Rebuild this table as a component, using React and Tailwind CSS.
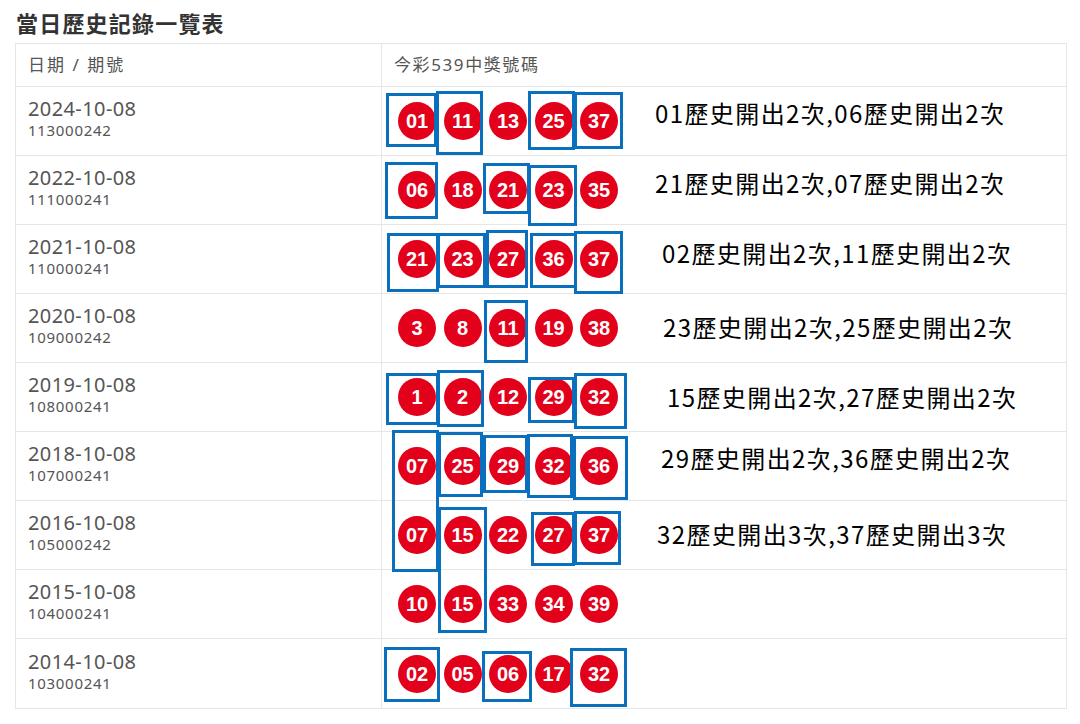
import React from 'react';

const ROWS = [
  { date: '2024-10-08', period: '113000242', balls: ['01', '11', '13', '25', '37'] },
  { date: '2022-10-08', period: '111000241', balls: ['06', '18', '21', '23', '35'] },
  { date: '2021-10-08', period: '110000241', balls: ['21', '23', '27', '36', '37'] },
  { date: '2020-10-08', period: '109000242', balls: ['3', '8', '11', '19', '38'] },
  { date: '2019-10-08', period: '108000241', balls: ['1', '2', '12', '29', '32'] },
  { date: '2018-10-08', period: '107000241', balls: ['07', '25', '29', '32', '36'] },
  { date: '2016-10-08', period: '105000242', balls: ['07', '15', '22', '27', '37'] },
  { date: '2015-10-08', period: '104000241', balls: ['10', '15', '33', '34', '39'] },
  { date: '2014-10-08', period: '103000241', balls: ['02', '05', '06', '17', '32'] },
];

// hand-drawn highlight boxes over the balls: [x1, y1, x2, y2]
const MARKS = [
  [386, 93, 437, 147], [436, 91, 483, 155], [528, 91, 575, 150], [574, 92, 623, 149],
  [385, 162, 438, 219], [483, 163, 530, 214], [528, 165, 577, 226],
  [387, 233, 439, 292], [437, 233, 486, 288], [486, 230, 528, 288], [530, 233, 577, 288], [574, 231, 623, 294],
  [484, 300, 528, 363],
  [386, 373, 439, 425], [437, 370, 484, 427], [528, 377, 575, 423], [574, 373, 627, 429],
  [392, 430, 439, 572], [438, 432, 483, 497], [483, 435, 528, 493], [527, 434, 573, 498], [573, 436, 628, 500],
  [438, 507, 487, 633], [531, 512, 575, 566], [574, 511, 621, 565],
  [384, 647, 440, 702], [482, 651, 532, 702], [570, 648, 627, 707],
];

// annotation notes: [left, top, text]
const NOTES = [
  [655, 97, '01歷史開出2次,06歷史開出2次'],
  [655, 167, '21歷史開出2次,07歷史開出2次'],
  [662, 237, '02歷史開出2次,11歷史開出2次'],
  [663, 311, '23歷史開出2次,25歷史開出2次'],
  [667, 381, '15歷史開出2次,27歷史開出2次'],
  [661, 442, '29歷史開出2次,36歷史開出2次'],
  [657, 518, '32歷史開出3次,37歷史開出3次'],
];

const Ball = ({ n }) => (
  <div className="w-[38px] h-[38px] rounded-full bg-[#e2001a] flex items-center justify-center text-white font-bold text-[20px] leading-none font-['Liberation_Sans',Arial,sans-serif]">
    {n}
  </div>
);

export default function App() {
  return (
    <div className="relative w-[1080px] h-[724px] bg-white px-[15px] pt-[8px] font-['Noto_Sans','Noto_Sans_CJK_TC',sans-serif]">
      <h1 className="text-[22px] leading-[29px] font-semibold tracking-[1.2px] text-[#333] pl-[1px] mb-[6px] font-['Noto_Sans_CJK_TC',sans-serif]">
        當日歷史記錄一覽表
      </h1>

      <div className="w-[1052px] border border-[#e6e6e6]">
        <div className="grid grid-cols-[366px_1fr] h-[43px] border-b border-[#e6e6e6] text-[#555] text-[17px]">
          <div className="flex items-center pl-[12px] border-r border-[#e6e6e6] tracking-[2px]">日期 / 期號</div>
          <div className="flex items-center pl-[12px] tracking-[1.6px]">今彩539中獎號碼</div>
        </div>
        {ROWS.map((r, i) => (
          <div
            key={r.period + i}
            className={`grid grid-cols-[366px_1fr] h-[69px] ${i < ROWS.length - 1 ? 'border-b border-[#e6e6e6]' : ''}`}
          >
            <div className="flex flex-col justify-center pl-[12px] pb-[6px] border-r border-[#e6e6e6] text-[#555]">
              <div className="text-[20px] leading-[24px] tracking-[0.4px]">{r.date}</div>
              <div className="text-[15px] leading-[18px] tracking-[0.7px]">{r.period}</div>
            </div>
            <div className="flex items-center pl-[16px] gap-[7.5px]">
              {r.balls.map((b, j) => (
                <Ball key={j} n={b} />
              ))}
            </div>
          </div>
        ))}
      </div>

      {MARKS.map(([x1, y1, x2, y2], i) => (
        <div
          key={i}
          className="absolute border-[3px] border-[#0a6fbd]"
          style={{ left: x1, top: y1, width: x2 - x1, height: y2 - y1 }}
        />
      ))}

      {NOTES.map(([x, y, t], i) => (
        <div
          key={i}
          className="absolute text-[24px] leading-[32px] tracking-[1.4px] text-black whitespace-nowrap font-['Noto_Sans_CJK_TC',sans-serif]"
          style={{ left: x, top: y }}
        >
          {t}
        </div>
      ))}
    </div>
  );
}
